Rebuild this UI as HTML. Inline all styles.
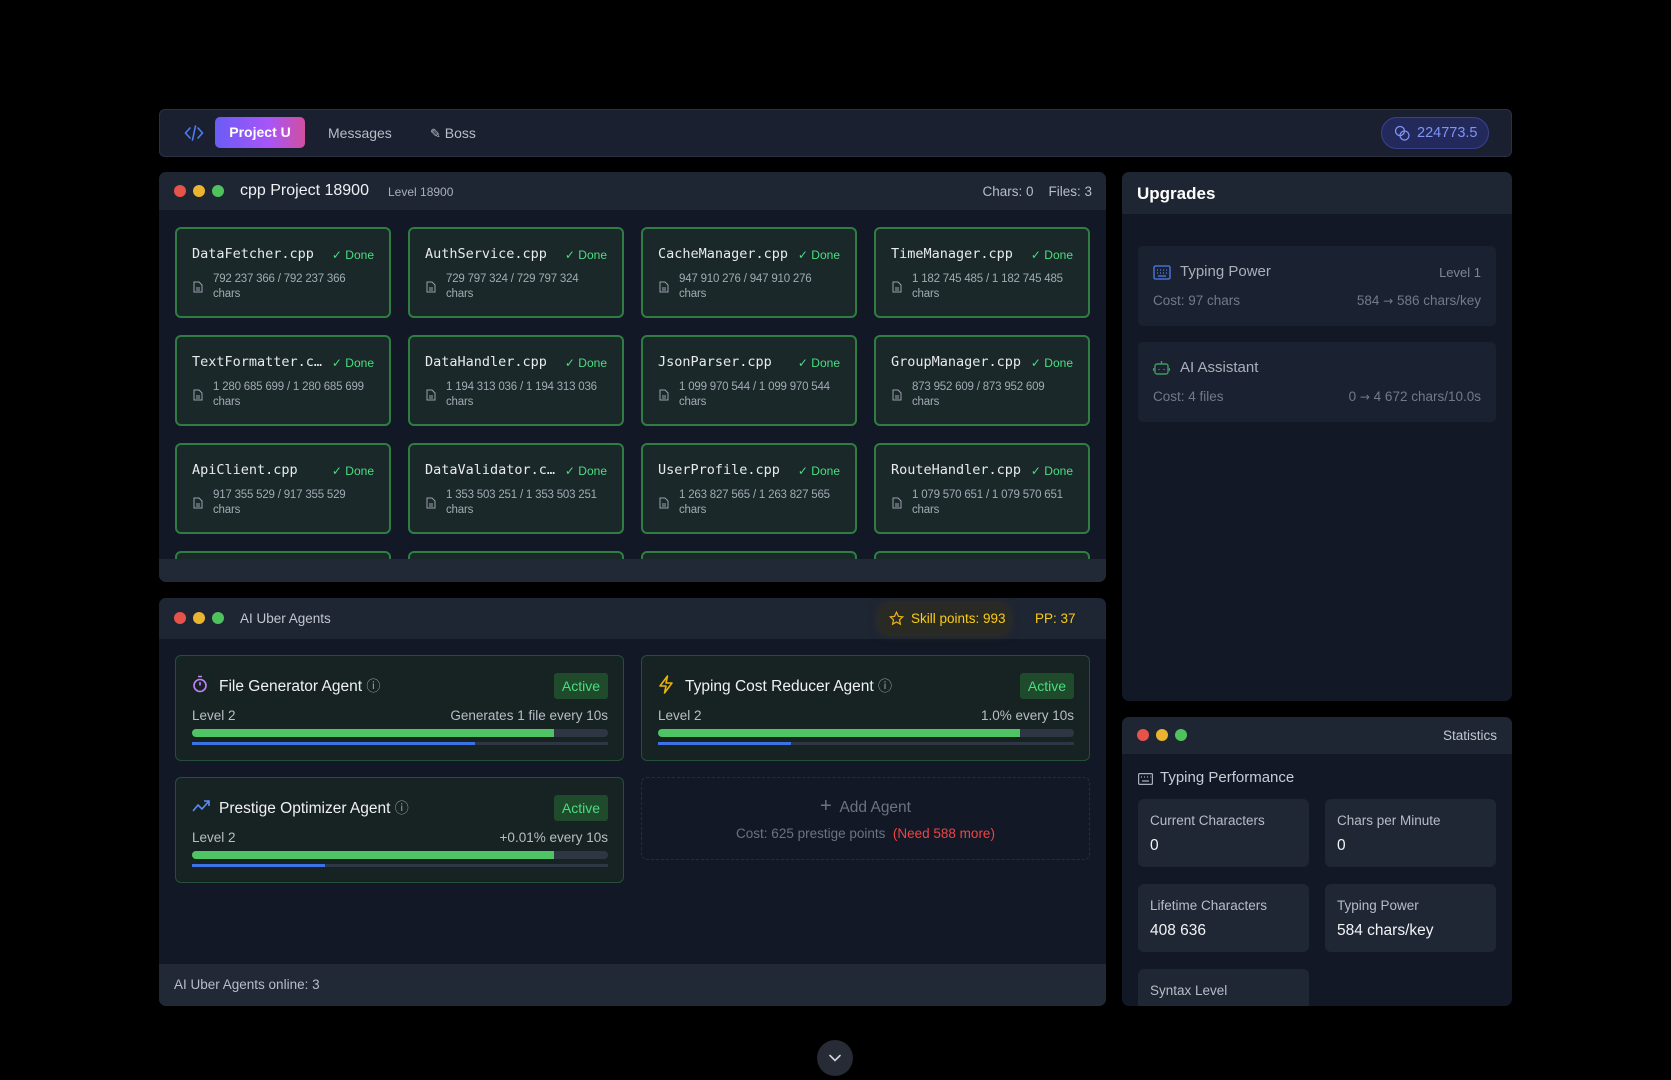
<!DOCTYPE html>
<html><head><meta charset="utf-8"><style>
*{box-sizing:border-box;margin:0;padding:0}
body{width:1671px;height:1080px;background:#000;font-family:"Liberation Sans",sans-serif;position:relative;overflow:hidden;color:#e5e7eb}
.abs{position:absolute}
.nav{left:159px;top:109px;width:1353px;height:48px;background:#1a2030;border:1px solid #2a3142;border-radius:6px}
.panel{background:#121826;border-radius:7px;overflow:hidden}
.hdr{position:absolute;left:0;top:0;right:0;background:#1e2533}
.dot{position:absolute;width:12px;height:12px;border-radius:50%}
.card{position:absolute;width:216px;height:91px;background:#1a2829;border:2px solid #2f7d43;border-radius:6px}
.fn{position:absolute;left:15px;top:17px;font-family:"DejaVu Sans Mono","Liberation Mono",monospace;font-size:13.5px;color:#e8eaee}
.done{position:absolute;right:15px;top:19px;font-size:12px;color:#4ade80}
.cnt{position:absolute;left:36px;top:43px;font-size:11.5px;color:#a3a9b4;line-height:15px;letter-spacing:-0.2px}
.fi{position:absolute;left:16px;top:52px}
.agent{position:absolute;width:449px;height:106px;background:#172322;border:1px solid #24503a;border-radius:6px}
.an{position:absolute;left:43px;top:20px;font-size:15.5px;color:#f0f1f3}
.act{position:absolute;right:15px;top:17px;background:#1f4a2c;color:#4ade80;font-size:14px;padding:5px 8px;border-radius:3px}
.lv{position:absolute;left:16px;top:52px;font-size:13.5px;color:#b8bdc6}
.rt{position:absolute;right:15px;top:52px;font-size:13.5px;color:#b8bdc6}
.bar1{position:absolute;left:16px;right:15px;top:73px;height:8px;background:#2e3644;border-radius:4px;overflow:hidden}
.bar2{position:absolute;left:16px;right:15px;top:86px;height:3px;background:#2e3644;overflow:hidden}
.stat{position:absolute;width:171px;height:68px;background:#1f2634;border-radius:6px}
.sl{position:absolute;left:12px;top:14px;font-size:13.5px;color:#b8bdc6}
.sv{position:absolute;left:12px;top:38px;font-size:15.5px;color:#f3f4f6}
.ar{font-family:"DejaVu Sans",sans-serif;font-size:12px}
</style></head><body>

<div class="abs nav">
  <svg class="abs" style="left:24px;top:14px" width="20" height="18" viewBox="0 0 20 18" fill="none" stroke="#4f7cf0" stroke-width="1.6" stroke-linecap="round"><path d="M6 4L1.5 9L6 14M14 4L18.5 9L14 14M11.5 2L8.5 16"/></svg>
  <div class="abs" style="left:55px;top:7px;width:90px;height:31px;border-radius:5px;background:linear-gradient(90deg,#6a5cf5,#a855f7 60%,#d04fa0);color:#fff;font-size:14px;font-weight:bold;line-height:31px;text-align:center">Project U</div>
  <div class="abs" style="left:168px;top:15px;font-size:14px;color:#b8bdc6">Messages</div>
  <div class="abs" style="left:270px;top:15px;font-size:14px;color:#b8bdc6"><span style="font-size:13px">✎</span> Boss</div>
  <div class="abs" style="left:1221px;top:7px;width:108px;height:32px;border-radius:16px;background:#23295a;border:1px solid #3a4290;color:#7d95f7;font-size:14.5px;line-height:30px;padding-left:35px">224773.5</div>
  <svg class="abs" style="left:1234px;top:15px" width="16" height="16" viewBox="0 0 16 16" fill="none" stroke="#7d95f7" stroke-width="1.3"><circle cx="6" cy="6" r="4.5"/><circle cx="10.5" cy="10.5" r="4.5"/></svg>
</div>

<div class="abs panel" style="left:159px;top:172px;width:947px;height:410px">
  <div class="hdr" style="height:38px">
    <div class="dot" style="left:15px;top:13px;background:#e5534b"></div>
    <div class="dot" style="left:34px;top:13px;background:#e9b42f"></div>
    <div class="dot" style="left:53px;top:13px;background:#4fc25d"></div>
    <div class="abs" style="left:81px;top:10px;font-size:16px;color:#f0f1f3">cpp Project 18900</div>
    <div class="abs" style="left:229px;top:13px;font-size:12px;color:#aab0ba">Level 18900</div>
    <div class="abs" style="right:14px;top:12px;font-size:13.5px;color:#b8bdc6">Chars: 0 &nbsp;&nbsp; Files: 3</div>
  </div>
  <div class="abs" style="left:0;right:0;top:387px;height:23px;background:#212836;z-index:2"></div>
</div>

<div class="abs panel" style="left:1122px;top:172px;width:390px;height:529px">
  <div class="hdr" style="height:42px"><div class="abs" style="left:15px;top:12px;font-size:17px;font-weight:bold;color:#fff">Upgrades</div></div>
  <div class="abs" style="left:16px;top:74px;width:358px;height:80px;background:#1a2130;border-radius:5px">
    <svg class="abs" style="left:15px;top:19px" width="18" height="15" viewBox="0 0 18 15" fill="none" stroke="#4f7cf0" stroke-width="1.3"><rect x="1" y="1" width="16" height="13" rx="1.5"/><path d="M4 5h1M7 5h1M10 5h1M13 5h1M4 8h1M7 8h1M10 8h1M13 8h1M5 11h8"/></svg>
    <div class="abs" style="left:42px;top:17px;font-size:15px;color:#aab0ba">Typing Power</div>
    <div class="abs" style="right:15px;top:19px;font-size:13px;color:#7f8693">Level 1</div>
    <div class="abs" style="left:15px;top:47px;font-size:13.5px;color:#737a87">Cost: 97 chars</div>
    <div class="abs" style="right:15px;top:47px;font-size:13.5px;color:#737a87">584 <span class="ar">→</span> 586 chars/key</div>
  </div>
  <div class="abs" style="left:16px;top:170px;width:358px;height:80px;background:#1a2130;border-radius:5px">
    <svg class="abs" style="left:15px;top:17px" width="17" height="17" viewBox="0 0 17 17" fill="none" stroke="#3f9a5a" stroke-width="1.4"><rect x="2" y="5" width="13" height="10" rx="2"/><path d="M8.5 5V2M6 10v1M11 10v1M0.5 9v3M16.5 9v3"/></svg>
    <div class="abs" style="left:42px;top:17px;font-size:15px;color:#aab0ba">AI Assistant</div>
    <div class="abs" style="left:15px;top:47px;font-size:13.5px;color:#737a87">Cost: 4 files</div>
    <div class="abs" style="right:15px;top:47px;font-size:13.5px;color:#737a87">0 <span class="ar">→</span> 4 672 chars/10.0s</div>
  </div>
</div>

<div class="abs panel" style="left:159px;top:598px;width:947px;height:408px">
  <div class="hdr" style="height:41px">
    <div class="dot" style="left:15px;top:14px;background:#e5534b"></div>
    <div class="dot" style="left:34px;top:14px;background:#e9b42f"></div>
    <div class="dot" style="left:53px;top:14px;background:#4fc25d"></div>
    <div class="abs" style="left:81px;top:13px;font-size:13.5px;color:#c2c7cf">AI Uber Agents</div>
    <div class="abs" style="left:720px;top:6px;width:130px;height:30px;border-radius:10px;background:#2a2a25;box-shadow:0 0 10px #3a3520"></div>
    <svg class="abs" style="left:730px;top:13px" width="15" height="15" viewBox="0 0 24 24" fill="none" stroke="#eab308" stroke-width="2"><path d="M12 2l3 6.5 7 .8-5.2 4.8 1.4 7L12 17.6 5.8 21.1l1.4-7L2 9.3l7-.8z"/></svg>
    <div class="abs" style="left:752px;top:13px;font-size:13.5px;color:#facc15">Skill points: 993</div>
    <div class="abs" style="left:876px;top:13px;font-size:13.5px;color:#facc15">PP: 37</div>
  </div>
  <div class="abs" style="left:0;right:0;bottom:0;height:42px;background:#212836"><div class="abs" style="left:15px;top:13px;font-size:13.5px;color:#b8bdc6">AI Uber Agents online: 3</div></div>
</div>

<div class="agent" style="left:175px;top:655px">
  <svg class="abs" style="left:16px;top:19px" width="16" height="18" viewBox="0 0 16 18" fill="none" stroke="#c084fc" stroke-width="1.6"><circle cx="8" cy="10.5" r="6"/><path d="M6 1.5h4M8 10.5V7"/></svg>
  <div class="an">File Generator Agent <span style="font-size:14px;color:#9aa0aa">ⓘ</span></div>
  <div class="act">Active</div>
  <div class="lv">Level 2</div><div class="rt">Generates 1 file every 10s</div>
  <div class="bar1"><div style="width:87%;height:100%;background:#4fc464"></div></div>
  <div class="bar2"><div style="width:68%;height:100%;background:#3b73e6"></div></div>
</div>
<div class="agent" style="left:641px;top:655px">
  <svg class="abs" style="left:16px;top:19px" width="16" height="19" viewBox="0 0 16 19" fill="none" stroke="#eab308" stroke-width="1.6" stroke-linejoin="round"><path d="M9.5 1L2 11h6l-1.5 7L14 8H8z"/></svg>
  <div class="an">Typing Cost Reducer Agent <span style="font-size:14px;color:#9aa0aa">ⓘ</span></div>
  <div class="act">Active</div>
  <div class="lv">Level 2</div><div class="rt">1.0% every 10s</div>
  <div class="bar1"><div style="width:87%;height:100%;background:#4fc464"></div></div>
  <div class="bar2"><div style="width:32%;height:100%;background:#3b73e6"></div></div>
</div>
<div class="agent" style="left:175px;top:777px">
  <svg class="abs" style="left:16px;top:22px" width="18" height="12" viewBox="0 0 18 12" fill="none" stroke="#5b8cf5" stroke-width="1.6"><path d="M1 11l5-6 4 4 7-8M12 1h5v5"/></svg>
  <div class="an">Prestige Optimizer Agent <span style="font-size:14px;color:#9aa0aa">ⓘ</span></div>
  <div class="act">Active</div>
  <div class="lv">Level 2</div><div class="rt">+0.01% every 10s</div>
  <div class="bar1"><div style="width:87%;height:100%;background:#4fc464"></div></div>
  <div class="bar2"><div style="width:32%;height:100%;background:#3b73e6"></div></div>
</div>
<div class="abs" style="left:641px;top:777px;width:449px;height:83px;border:1px dashed #262e3c;border-radius:6px">
  <div class="abs" style="left:0;right:0;top:17px;text-align:center;font-size:15.5px;color:#6b7280"><span style="font-size:20px;font-weight:lighter">+</span>&nbsp; Add Agent</div>
  <div class="abs" style="left:0;right:0;top:48px;text-align:center;font-size:13.5px;color:#6b7280">Cost: 625 prestige points &nbsp;<span style="color:#ef4444">(Need 588 more)</span></div>
</div>

<div class="abs panel" style="left:1122px;top:717px;width:390px;height:289px">
  <div class="hdr" style="height:37px">
    <div class="dot" style="left:15px;top:12px;background:#e5534b"></div>
    <div class="dot" style="left:34px;top:12px;background:#e9b42f"></div>
    <div class="dot" style="left:53px;top:12px;background:#4fc25d"></div>
    <div class="abs" style="right:15px;top:11px;font-size:13.5px;color:#c2c7cf">Statistics</div>
  </div>
  <svg class="abs" style="left:16px;top:56px" width="15" height="12" viewBox="0 0 15 12" fill="none" stroke="#aab0ba" stroke-width="1.2"><rect x="0.6" y="0.6" width="13.8" height="10.8" rx="1"/><path d="M3 4h1M6 4h1M9 4h1M12 4h0.5M4 8h7"/></svg>
  <div class="abs" style="left:38px;top:52px;font-size:15px;color:#c8ccd3">Typing Performance</div>
  <div class="stat" style="left:16px;top:82px"><div class="sl">Current Characters</div><div class="sv">0</div></div>
  <div class="stat" style="left:203px;top:82px"><div class="sl">Chars per Minute</div><div class="sv">0</div></div>
  <div class="stat" style="left:16px;top:167px"><div class="sl">Lifetime Characters</div><div class="sv">408 636</div></div>
  <div class="stat" style="left:203px;top:167px"><div class="sl">Typing Power</div><div class="sv">584 chars/key</div></div>
  <div class="stat" style="left:16px;top:252px"><div class="sl">Syntax Level</div></div>
</div>

<div class="abs" style="left:817px;top:1040px;width:36px;height:36px;border-radius:50%;background:#262b35">
  <svg class="abs" style="left:12px;top:14px" width="12" height="8" viewBox="0 0 12 8" fill="none" stroke="#d1d5db" stroke-width="1.6" stroke-linecap="round"><path d="M1 1.5l5 5 5-5"/></svg>
</div>

<div style="position:absolute;left:175px;top:227px">
<div class="card" style="left:0;top:0"><div class="fn">DataFetcher.cpp</div><div class="done">✓ Done</div><svg class="fi" width="10" height="12" viewBox="0 0 10 12" fill="none" stroke="#9aa0aa" stroke-width="1"><path d="M1 1h5l3 3v7H1z M3 7h4M3 9h4"/></svg><div class="cnt">792 237 366 / 792 237 366<br>chars</div></div>
<div class="card" style="left:233px;top:0"><div class="fn">AuthService.cpp</div><div class="done">✓ Done</div><svg class="fi" width="10" height="12" viewBox="0 0 10 12" fill="none" stroke="#9aa0aa" stroke-width="1"><path d="M1 1h5l3 3v7H1z M3 7h4M3 9h4"/></svg><div class="cnt">729 797 324 / 729 797 324<br>chars</div></div>
<div class="card" style="left:466px;top:0"><div class="fn">CacheManager.cpp</div><div class="done">✓ Done</div><svg class="fi" width="10" height="12" viewBox="0 0 10 12" fill="none" stroke="#9aa0aa" stroke-width="1"><path d="M1 1h5l3 3v7H1z M3 7h4M3 9h4"/></svg><div class="cnt">947 910 276 / 947 910 276<br>chars</div></div>
<div class="card" style="left:699px;top:0"><div class="fn">TimeManager.cpp</div><div class="done">✓ Done</div><svg class="fi" width="10" height="12" viewBox="0 0 10 12" fill="none" stroke="#9aa0aa" stroke-width="1"><path d="M1 1h5l3 3v7H1z M3 7h4M3 9h4"/></svg><div class="cnt">1 182 745 485 / 1 182 745 485<br>chars</div></div>

<div class="card" style="left:0;top:108px"><div class="fn">TextFormatter.c…</div><div class="done">✓ Done</div><svg class="fi" width="10" height="12" viewBox="0 0 10 12" fill="none" stroke="#9aa0aa" stroke-width="1"><path d="M1 1h5l3 3v7H1z M3 7h4M3 9h4"/></svg><div class="cnt">1 280 685 699 / 1 280 685 699<br>chars</div></div>
<div class="card" style="left:233px;top:108px"><div class="fn">DataHandler.cpp</div><div class="done">✓ Done</div><svg class="fi" width="10" height="12" viewBox="0 0 10 12" fill="none" stroke="#9aa0aa" stroke-width="1"><path d="M1 1h5l3 3v7H1z M3 7h4M3 9h4"/></svg><div class="cnt">1 194 313 036 / 1 194 313 036<br>chars</div></div>
<div class="card" style="left:466px;top:108px"><div class="fn">JsonParser.cpp</div><div class="done">✓ Done</div><svg class="fi" width="10" height="12" viewBox="0 0 10 12" fill="none" stroke="#9aa0aa" stroke-width="1"><path d="M1 1h5l3 3v7H1z M3 7h4M3 9h4"/></svg><div class="cnt">1 099 970 544 / 1 099 970 544<br>chars</div></div>
<div class="card" style="left:699px;top:108px"><div class="fn">GroupManager.cpp</div><div class="done">✓ Done</div><svg class="fi" width="10" height="12" viewBox="0 0 10 12" fill="none" stroke="#9aa0aa" stroke-width="1"><path d="M1 1h5l3 3v7H1z M3 7h4M3 9h4"/></svg><div class="cnt">873 952 609 / 873 952 609<br>chars</div></div>

<div class="card" style="left:0;top:216px"><div class="fn">ApiClient.cpp</div><div class="done">✓ Done</div><svg class="fi" width="10" height="12" viewBox="0 0 10 12" fill="none" stroke="#9aa0aa" stroke-width="1"><path d="M1 1h5l3 3v7H1z M3 7h4M3 9h4"/></svg><div class="cnt">917 355 529 / 917 355 529<br>chars</div></div>
<div class="card" style="left:233px;top:216px"><div class="fn">DataValidator.c…</div><div class="done">✓ Done</div><svg class="fi" width="10" height="12" viewBox="0 0 10 12" fill="none" stroke="#9aa0aa" stroke-width="1"><path d="M1 1h5l3 3v7H1z M3 7h4M3 9h4"/></svg><div class="cnt">1 353 503 251 / 1 353 503 251<br>chars</div></div>
<div class="card" style="left:466px;top:216px"><div class="fn">UserProfile.cpp</div><div class="done">✓ Done</div><svg class="fi" width="10" height="12" viewBox="0 0 10 12" fill="none" stroke="#9aa0aa" stroke-width="1"><path d="M1 1h5l3 3v7H1z M3 7h4M3 9h4"/></svg><div class="cnt">1 263 827 565 / 1 263 827 565<br>chars</div></div>
<div class="card" style="left:699px;top:216px"><div class="fn">RouteHandler.cpp</div><div class="done">✓ Done</div><svg class="fi" width="10" height="12" viewBox="0 0 10 12" fill="none" stroke="#9aa0aa" stroke-width="1"><path d="M1 1h5l3 3v7H1z M3 7h4M3 9h4"/></svg><div class="cnt">1 079 570 651 / 1 079 570 651<br>chars</div></div>

<div style="position:absolute;left:0;top:324px;width:920px;height:8px;overflow:hidden">
<div class="card" style="left:0;top:0"></div><div class="card" style="left:233px;top:0"></div><div class="card" style="left:466px;top:0"></div><div class="card" style="left:699px;top:0"></div>
</div>
</div>
</body></html>
